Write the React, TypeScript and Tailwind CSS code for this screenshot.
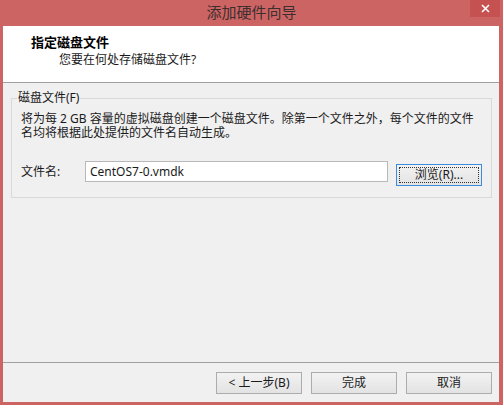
import React from "react"

const font = "font-['Segoe_UI','Noto_Sans','Noto_Sans_CJK_SC',sans-serif]"

function Btn({ label, focused = false }: { label: string; focused?: boolean }) {
  return (
    <button
      className={
        "relative w-[86px] h-[22px] text-[12px] text-[#1a1a1a] bg-gradient-to-b from-[#f2f2f2] to-[#e3e3e3] border " +
        (focused ? "border-[#3c8be0]" : "border-[#acacac]")
      }
    >
      {focused && <span className="absolute inset-[2px] border border-dotted border-[#333]" />}
      <span className="relative">{label}</span>
    </button>
  )
}

export default function App() {
  return (
    <div className={`w-[503px] h-[405px] bg-[#cd6464] flex flex-col ${font}`}>
      {/* title bar */}
      <div className="h-[26px] shrink-0 flex items-start relative">
        <div className="flex-1 text-center text-[15px] leading-[24px] text-[#3b2e2e]">添加硬件向导</div>
        <div className="absolute right-[3px] top-0 w-[30px] h-[17px] bg-[#c55151] flex items-center justify-center">
          <svg width="9" height="9" viewBox="0 0 9 9">
            <path d="M1 1L8 8M8 1L1 8" stroke="#fff" strokeWidth="1.6" />
          </svg>
        </div>
      </div>

      {/* body */}
      <div className="flex-1 ml-[3px] mr-[4px] mb-[3px] bg-[#f0f0f0] flex flex-col">
        <div className="h-[57px] bg-white border-b border-[#a0a0a0] pt-[8px] pl-[28px]">
          <div className="text-[13px] leading-[16px] font-bold text-black">指定磁盘文件</div>
          <div className="text-[12px] leading-[14px] text-[#1a1a1a] mt-[3px] pl-[28px]">您要在何处存储磁盘文件?</div>
        </div>

        <div className="flex-1 px-[8px] pt-[8px]">
          <fieldset className="border border-[#d9d9d9] pl-[5px] pr-[9px] pb-[11px]">
            <legend className="px-px text-[12px] leading-[14px] text-[#1a1a1a]">磁盘文件(F)</legend>
            <div className="mt-[7px] pl-[4px] text-[12px] leading-[14px] text-[#1a1a1a] whitespace-nowrap">
              将为每 2 GB 容量的虚拟磁盘创建一个磁盘文件。除第一个文件之外，每个文件的文件
              <br />
              名均将根据此处提供的文件名自动生成。
            </div>
            <div className="mt-[21px] pl-[4px] flex items-start">
              <div className="w-[64px] text-[12px] leading-[21px] text-[#1a1a1a]">文件名:</div>
              <div className="w-[303px] h-[21px] bg-white border border-[#b8b8b8] px-[4px] text-[12px] leading-[19px] text-[#1a1a1a]">
                CentOS7-0.vmdk
              </div>
              <div className="ml-[8px]">
                <Btn label="浏览(R)..." focused />
              </div>
            </div>
          </fieldset>
        </div>

        <div className="h-[40px] border-t border-[#a0a0a0] flex items-start justify-end gap-[9px] pt-[9px] pr-[7px]">
          <Btn label="< 上一步(B)" />
          <Btn label="完成" />
          <Btn label="取消" />
        </div>
      </div>
    </div>
  )
}
